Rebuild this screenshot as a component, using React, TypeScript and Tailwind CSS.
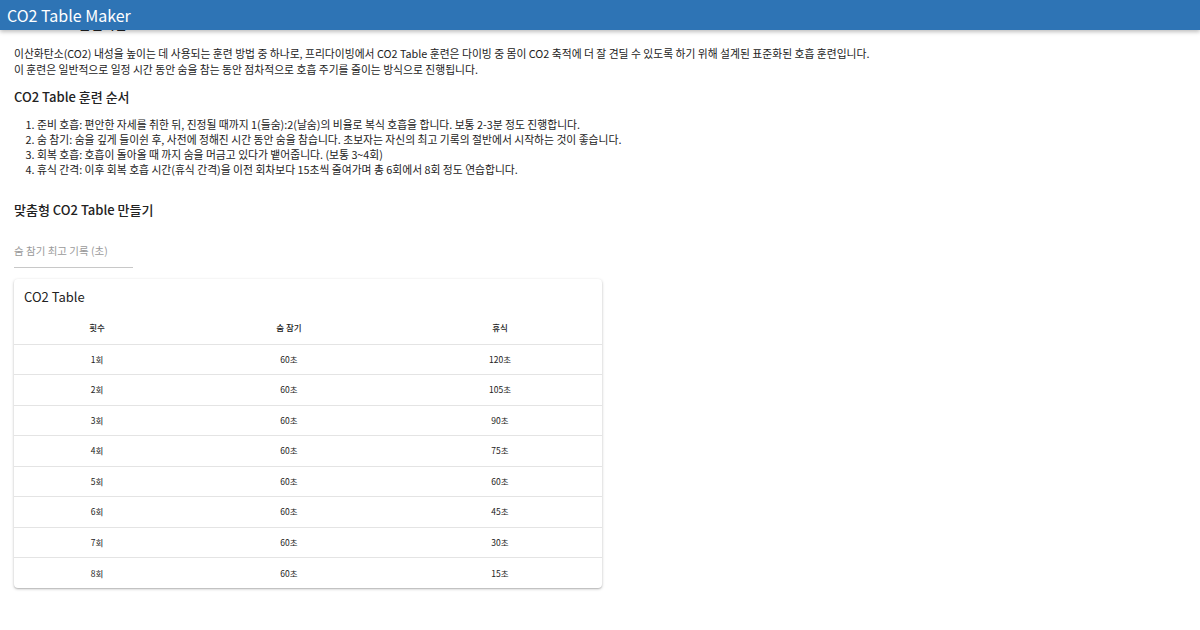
const rows = [
  { n: "1회", hold: "60초", rest: "120초" },
  { n: "2회", hold: "60초", rest: "105초" },
  { n: "3회", hold: "60초", rest: "90초" },
  { n: "4회", hold: "60초", rest: "75초" },
  { n: "5회", hold: "60초", rest: "60초" },
  { n: "6회", hold: "60초", rest: "45초" },
  { n: "7회", hold: "60초", rest: "30초" },
  { n: "8회", hold: "60초", rest: "15초" },
];

const steps = [
  "준비 호흡: 편안한 자세를 취한 뒤, 진정될 때까지 1(들숨):2(날숨)의 비율로 복식 호흡을 합니다. 보통 2-3분 정도 진행합니다.",
  "숨 참기: 숨을 깊게 들이쉰 후, 사전에 정해진 시간 동안 숨을 참습니다. 초보자는 자신의 최고 기록의 절반에서 시작하는 것이 좋습니다.",
  "회복 호흡: 호흡이 돌아올 때 까지 숨을 머금고 있다가 뱉어줍니다. (보통 3~4회)",
  "휴식 간격: 이후 회복 호흡 시간(휴식 간격)을 이전 회차보다 15초씩 줄여가며 총 6회에서 8회 정도 연습합니다.",
];

export default function App() {
  return (
    <div className="relative h-[630px] w-[1200px] overflow-hidden bg-white text-[#222] [font-family:'Noto_Sans_CJK_KR','Noto_Sans',sans-serif]">
      <header className="absolute left-0 right-0 top-0 z-10 flex h-[30px] items-center bg-[#2e74b5] px-[7px] shadow-[0_2px_4px_rgba(0,0,0,0.25)]">
        <span className="text-[16px] text-white">CO2 Table Maker</span>
      </header>
      <main className="px-[14px] pt-[14px]">
        <h2 className="text-[13px] font-medium leading-[20px]">CO2 Table 훈련이란?</h2>
        <p className="mt-[11px] text-[10.8px] leading-[16px]">
          이산화탄소(CO2) 내성을 높이는 데 사용되는 훈련 방법 중 하나로, 프리다이빙에서 CO2 Table 훈련은 다이빙 중 몸이 CO2 축적에 더 잘 견딜 수 있도록 하기 위해 설계된 표준화된 호흡 훈련입니다.
          <br />
          이 훈련은 일반적으로 일정 시간 동안 숨을 참는 동안 점차적으로 호흡 주기를 줄이는 방식으로 진행됩니다.
        </p>
        <h2 className="mt-[10px] text-[13px] font-medium leading-[20px]">CO2 Table 훈련 순서</h2>
        <ol className="mt-[10px] list-decimal pl-[23px] text-[10.8px] leading-[15px]">
          {steps.map((s) => (
            <li key={s}>{s}</li>
          ))}
        </ol>
        <h2 className="mt-[23px] text-[13px] font-medium leading-[20px]">맞춤형 CO2 Table 만들기</h2>
        <div className="mt-[23px] w-[119px] border-b border-[#c8c8c8] pb-[8px] text-[10.5px] leading-[16px] text-[#9a9a9a]">
          숨 참기 최고 기록 (초)
        </div>
        <section className="mt-[11px] w-[588px] rounded-[4px] bg-white shadow-[0_1px_3px_rgba(0,0,0,0.25),0_1px_1px_rgba(0,0,0,0.1)]">
          <h3 className="px-[10px] pt-[8px] text-[13px] leading-[20px]">CO2 Table</h3>
          <table className="mt-[3px] w-full table-fixed border-collapse text-center text-[8.5px]">
            <colgroup>
              <col className="w-[166px]" />
              <col className="w-[218px]" />
              <col className="w-[204px]" />
            </colgroup>
            <thead>
              <tr className="h-[34px] border-b border-[#e4e4e4]">
                <th className="pt-[2px] font-medium">횟수</th>
                <th className="pt-[2px] font-medium">숨 참기</th>
                <th className="pt-[2px] font-medium">휴식</th>
              </tr>
            </thead>
            <tbody>
              {rows.map((r, i) => (
                <tr key={r.n} className={i < rows.length - 1 ? "h-[30.5px] border-b border-[#e4e4e4]" : "h-[30.5px]"}>
                  <td>{r.n}</td>
                  <td>{r.hold}</td>
                  <td>{r.rest}</td>
                </tr>
              ))}
            </tbody>
          </table>
        </section>
      </main>
    </div>
  );
}
